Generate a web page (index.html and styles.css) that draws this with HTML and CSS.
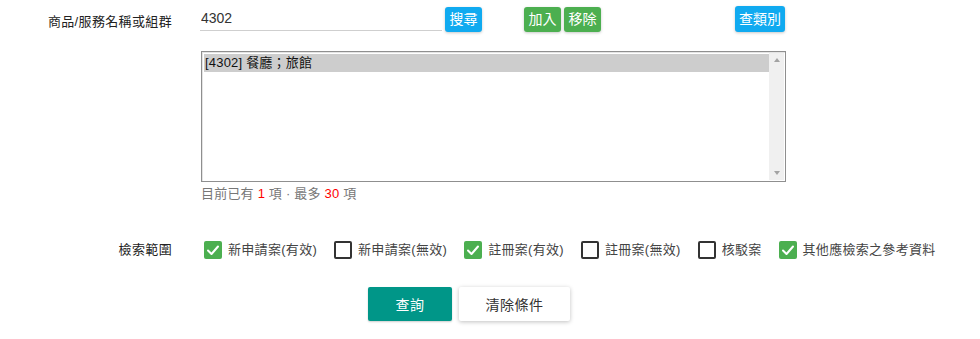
FILE: index.html
```html
<!DOCTYPE html>
<html lang="zh-Hant">
<head>
<meta charset="utf-8">
<link rel="stylesheet" href="styles.css">
</head>
<body>
<form class="form">
  <div class="row row-top">
    <div class="lbl lbl-top">商品/服務名稱或組群</div>
    <div class="field">
      <div class="top-controls">
        <input class="kw" type="text" value="4302">
        <button type="button" class="btn btn-blue btn-search">搜尋</button>
        <button type="button" class="btn btn-green btn-add">加入</button>
        <button type="button" class="btn btn-green btn-remove">移除</button>
        <button type="button" class="btn btn-blue btn-class">查類別</button>
      </div>
      <div class="listbox">
        <div class="options">
          <div class="option selected">[4302] 餐廳；旅館</div>
        </div>
        <div class="scrollbar">
          <span class="arrow up"></span>
          <span class="arrow down"></span>
        </div>
      </div>
      <div class="count">目前已有 <span class="num">1</span> 項 · 最多 <span class="num">30</span> 項</div>
    </div>
  </div>

  <div class="row row-scope">
    <div class="lbl">檢索範圍</div>
    <div class="field checks">
      <label class="check"><span class="box on"><svg viewBox="0 0 18 18" width="18" height="18"><polyline points="4,9.5 7.5,13 14,5.5" fill="none" stroke="#fff" stroke-width="2" stroke-linecap="round" stroke-linejoin="round"/></svg></span>新申請案(有效)</label>
      <label class="check"><span class="box"></span>新申請案(無效)</label>
      <label class="check"><span class="box on"><svg viewBox="0 0 18 18" width="18" height="18"><polyline points="4,9.5 7.5,13 14,5.5" fill="none" stroke="#fff" stroke-width="2" stroke-linecap="round" stroke-linejoin="round"/></svg></span>註冊案(有效)</label>
      <label class="check"><span class="box"></span>註冊案(無效)</label>
      <label class="check"><span class="box"></span>核駁案</label>
      <label class="check"><span class="box on"><svg viewBox="0 0 18 18" width="18" height="18"><polyline points="4,9.5 7.5,13 14,5.5" fill="none" stroke="#fff" stroke-width="2" stroke-linecap="round" stroke-linejoin="round"/></svg></span>其他應檢索之參考資料</label>
    </div>
  </div>

  <div class="actions">
    <button type="button" class="btn-main btn-query">查詢</button>
    <button type="button" class="btn-main btn-clear">清除條件</button>
  </div>
</form>
</body>
</html>
```

FILE: styles.css
```css
html, body {
  margin: 0;
  padding: 0;
  background: #fff;
}
body {
  width: 980px;
  height: 339px;
  overflow: hidden;
  font-family: "Liberation Sans", "Noto Sans CJK TC", sans-serif;
  color: #333;
}
.form {
  margin: 0;
  padding: 0;
}
.row {
  display: flex;
  align-items: flex-start;
}
.lbl {
  width: 172px;
  flex: none;
  text-align: right;
  font-size: 13px;
  line-height: 18px;
  letter-spacing: 0.35px;
  color: #222;
  margin-right: 28px;
}
.lbl-top {
  padding-top: 13px;
}
.field {
  flex: none;
}
.top-controls {
  display: flex;
  align-items: flex-start;
  padding-top: 7px;
}
.kw {
  width: 242px;
  height: 24px;
  box-sizing: border-box;
  border: none;
  border-bottom: 1px solid #cfcfcf;
  padding: 0 1px 1px;
  margin: 0;
  font-family: "Liberation Sans", "Noto Sans CJK TC", sans-serif;
  font-size: 14px;
  color: #333;
  outline: none;
  background: transparent;
}
.btn {
  height: 25px;
  border: none;
  border-radius: 3px;
  padding: 0 4px;
  margin: 0;
  font-family: "Liberation Sans", "Noto Sans CJK TC", sans-serif;
  font-size: 14px;
  line-height: 25px;
  color: #fff;
  box-shadow: 0 1px 3px rgba(0,0,0,0.22);
  cursor: pointer;
}
.btn-blue { background: #10aaf0; }
.btn-green { background: #4caf50; }
.btn-search { width: 37px; margin-left: 3px; }
.btn-add { width: 37px; margin-left: 42px; }
.btn-remove { width: 37px; margin-left: 3px; }
.btn-class { width: 50px; margin-left: 134px; margin-top: -1px; height: 26px; }

.listbox {
  margin-top: 19px;
  margin-left: 1px;
  width: 585px;
  height: 131px;
  box-sizing: border-box;
  border: 1px solid #8f8f8f;
  box-shadow: inset 1px 1px 0 #e4e4e4;
  display: flex;
  padding: 2px 1px 2px 2px;
}
.options {
  flex: 1;
}
.option {
  font-size: 13px;
  line-height: 18px;
  height: 18px;
  padding-left: 1px;
  letter-spacing: 0.2px;
  color: #111;
}
.option.selected {
  background: #cdcdcd;
}
.scrollbar {
  width: 15px;
  flex: none;
  background: #f0f0f0;
  display: flex;
  flex-direction: column;
  justify-content: space-between;
  align-items: center;
  padding: 5px 0 5px;
  margin: -1px 0 -1px 0;
}
.arrow {
  width: 0;
  height: 0;
  border-left: 3.5px solid transparent;
  border-right: 3.5px solid transparent;
}
.arrow.up { border-bottom: 4px solid #a3a3a3; }
.arrow.down { border-top: 4px solid #a3a3a3; }

.count {
  margin-top: 4px;
  margin-left: 1px;
  font-size: 13px;
  line-height: 16px;
  letter-spacing: 0.2px;
  color: #777;
}
.count .num { color: #f00; }

.row-scope {
  margin-top: 39px;
  align-items: center;
}
.row-scope .lbl {
  margin-right: 32px;
}
.checks {
  display: flex;
  align-items: center;
}
.check {
  display: flex;
  align-items: center;
  font-size: 13px;
  line-height: 18px;
  letter-spacing: 0.3px;
  color: #444;
  margin-right: 17px;
}
.box {
  width: 18px;
  height: 18px;
  box-sizing: border-box;
  border: 2px solid #333;
  border-radius: 2px;
  margin-right: 6px;
  flex: none;
  display: inline-flex;
}
.box.on {
  border: none;
  background: #4caf50;
}
.box svg { display: block; }

.actions {
  display: flex;
  padding-left: 368px;
  margin-top: 28px;
}
.btn-main {
  height: 34px;
  border: none;
  border-radius: 2px;
  font-family: "Liberation Sans", "Noto Sans CJK TC", sans-serif;
  font-size: 14px;
  letter-spacing: 0.5px;
  padding: 0;
  margin: 0;
  cursor: pointer;
}
.btn-query {
  width: 84px;
  background: #009688;
  color: #fff;
  box-shadow: 0 1px 2px rgba(0,0,0,0.2);
}
.btn-clear {
  width: 111px;
  margin-left: 7px;
  background: #fff;
  color: #333;
  box-shadow: 0 1px 4px rgba(0,0,0,0.25);
}
```
